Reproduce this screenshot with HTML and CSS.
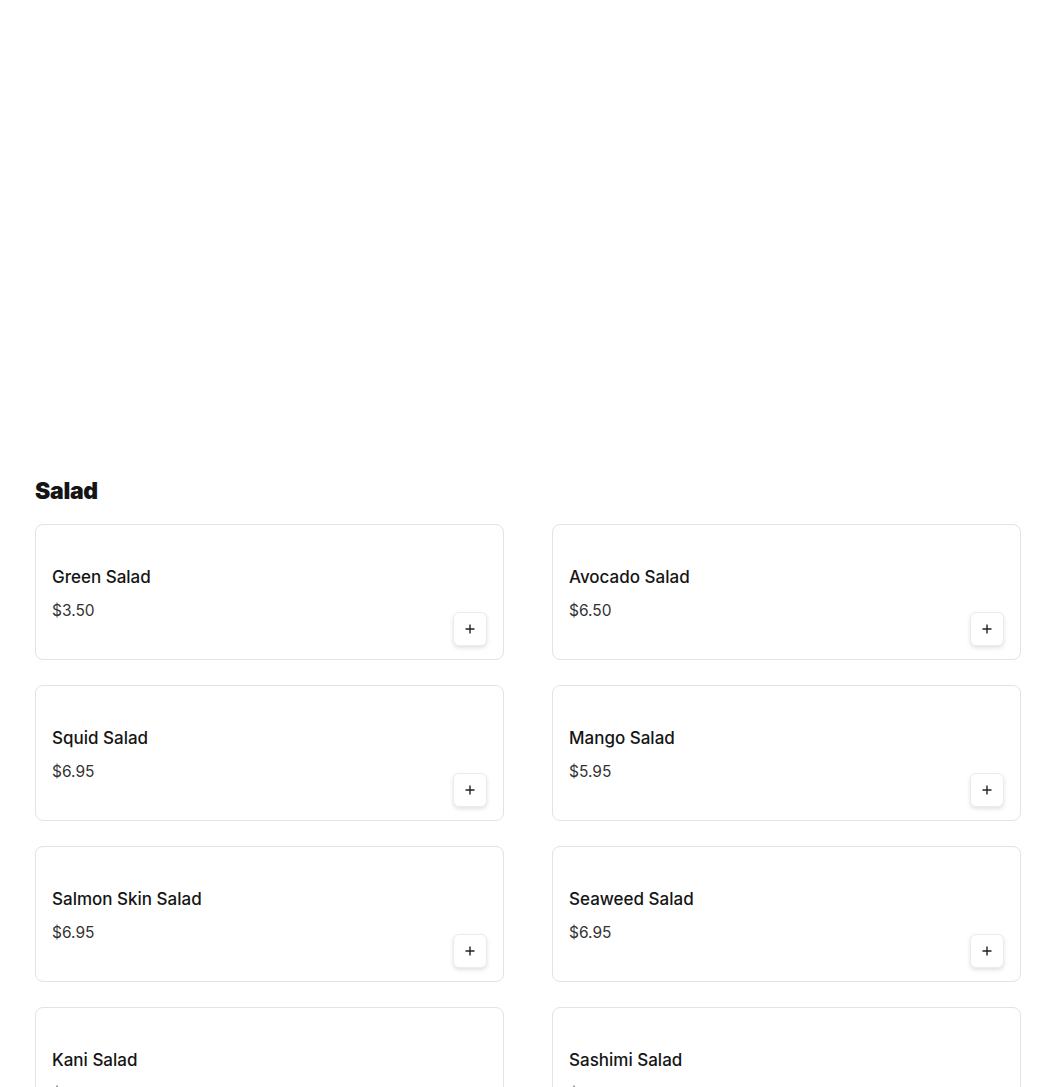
FILE: index.html
```html
<!DOCTYPE html>
<html lang="en">
<head>
<meta charset="utf-8">
<title>Salad</title>
<link rel="stylesheet" href="styles.css">
</head>
<body>
<main class="page">
  <section class="section">
    <h2 class="section-title">Salad</h2>
    <div class="grid">
      <article class="card"><div class="info"><h3 class="name">Green Salad</h3><p class="price">$3.50</p></div><button class="add" aria-label="Add"><svg viewBox="0 0 12 12" width="12" height="12"><path d="M6 1.5v9M1.5 6h9" stroke="#222" stroke-width="1.4" fill="none"/></svg></button></article>
      <article class="card"><div class="info"><h3 class="name">Avocado Salad</h3><p class="price">$6.50</p></div><button class="add" aria-label="Add"><svg viewBox="0 0 12 12" width="12" height="12"><path d="M6 1.5v9M1.5 6h9" stroke="#222" stroke-width="1.4" fill="none"/></svg></button></article>
      <article class="card"><div class="info"><h3 class="name">Squid Salad</h3><p class="price">$6.95</p></div><button class="add" aria-label="Add"><svg viewBox="0 0 12 12" width="12" height="12"><path d="M6 1.5v9M1.5 6h9" stroke="#222" stroke-width="1.4" fill="none"/></svg></button></article>
      <article class="card"><div class="info"><h3 class="name">Mango Salad</h3><p class="price">$5.95</p></div><button class="add" aria-label="Add"><svg viewBox="0 0 12 12" width="12" height="12"><path d="M6 1.5v9M1.5 6h9" stroke="#222" stroke-width="1.4" fill="none"/></svg></button></article>
      <article class="card"><div class="info"><h3 class="name">Salmon Skin Salad</h3><p class="price">$6.95</p></div><button class="add" aria-label="Add"><svg viewBox="0 0 12 12" width="12" height="12"><path d="M6 1.5v9M1.5 6h9" stroke="#222" stroke-width="1.4" fill="none"/></svg></button></article>
      <article class="card"><div class="info"><h3 class="name">Seaweed Salad</h3><p class="price">$6.95</p></div><button class="add" aria-label="Add"><svg viewBox="0 0 12 12" width="12" height="12"><path d="M6 1.5v9M1.5 6h9" stroke="#222" stroke-width="1.4" fill="none"/></svg></button></article>
      <article class="card"><div class="info"><h3 class="name">Kani Salad</h3><p class="price">$6.95</p></div><button class="add" aria-label="Add"><svg viewBox="0 0 12 12" width="12" height="12"><path d="M6 1.5v9M1.5 6h9" stroke="#222" stroke-width="1.4" fill="none"/></svg></button></article>
      <article class="card"><div class="info"><h3 class="name">Sashimi Salad</h3><p class="price">$9.95</p></div><button class="add" aria-label="Add"><svg viewBox="0 0 12 12" width="12" height="12"><path d="M6 1.5v9M1.5 6h9" stroke="#222" stroke-width="1.4" fill="none"/></svg></button></article>
    </div>
  </section>
</main>
</body>
</html>
```
FILE: styles.css
```css
html, body {
  margin: 0;
  padding: 0;
  background: #fff;
}
body {
  font-family: Inter, "DejaVu Sans", sans-serif;
  color: #111;
}
.page {
  padding: 477px 29px 0 35px;
}
.section-title {
  margin: 0 0 19px;
  font-size: 23px;
  line-height: 28px;
  font-weight: 900;
  color: #151515;
  letter-spacing: -0.3px;
}
.grid {
  display: grid;
  grid-template-columns: 469px 469px;
  column-gap: 48px;
  row-gap: 25px;
}
.card {
  box-sizing: border-box;
  height: 136px;
  border: 1px solid #e3e3e3;
  border-radius: 8px;
  padding: 40px 16px 13px;
  display: flex;
  justify-content: space-between;
  align-items: flex-end;
}
.info {
  align-self: flex-start;
}
.name {
  margin: 0;
  font-size: 17px;
  line-height: 24px;
  font-weight: 500;
  color: #151515;
}
.price {
  margin: 12px 0 0;
  font-size: 15.5px;
  line-height: 20px;
  color: #333;
}
.add {
  width: 34px;
  height: 34px;
  padding: 0;
  border: 1px solid #ececec;
  border-radius: 6px;
  background: #fff;
  box-shadow: 0 2px 4px rgba(0,0,0,0.12);
  display: flex;
  align-items: center;
  justify-content: center;
}
```
